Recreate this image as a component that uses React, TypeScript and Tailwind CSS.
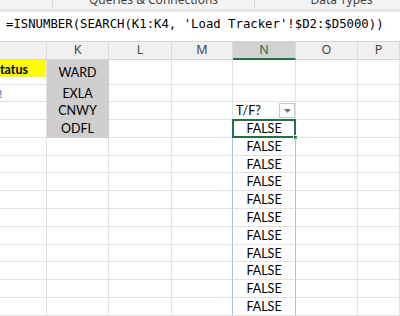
const COLS = ["w-[47px]", "w-[62px]", "w-[63px]", "w-[61px]", "w-[63px]", "w-[62px]", "flex-1"];
const LETTERS = ["", "K", "L", "M", "N", "O", "P"];
const HEIGHTS = [
  "h-[25px]", "h-[17px]", "h-[18px]", "h-[18px]", "h-[18px]", "h-[17px]", "h-[18px]",
  "h-[18px]", "h-[18px]", "h-[18px]", "h-[17px]", "h-[18px]", "h-[18px]", "h-[18px]",
];
const CARRIERS = ["WARD", "EXLA", "CNWY", "ODFL"];

const cellFont = { fontFamily: "Lato, 'Liberation Sans', sans-serif" };

function Cell({ r, c }: { r: number; c: number }) {
  const base = `${COLS[c]} shrink-0 border-r border-b relative flex items-center overflow-visible`;
  const inTable = r >= 3;

  // J column
  if (c === 0) {
    if (r === 0)
      return (
        <div className={`${base} border-[#e1e1e1] items-start overflow-hidden`}>
          <div className="h-[17px] w-full bg-[#ffff00] flex items-center justify-end pr-[18px] pt-[3px] font-bold text-[12.5px] text-black">
            Status
          </div>
        </div>
      );
    if (r === 1)
      return (
        <div className={`${base} border-[#e1e1e1] pt-[2px] text-[12px] text-[#4472c4] -indent-[1px]`}>!</div>
      );
    return <div className={`${base} border-[#e1e1e1]`} />;
  }

  // K column
  if (c === 1 && r < 4)
    return (
      <div className={`${base} bg-[#d0cece] border-[#d0cece] justify-center pt-[2px] text-[12.5px] text-black`}>
        {CARRIERS[r]}
      </div>
    );

  // M column right border becomes table edge
  if (c === 3)
    return <div className={`${base} border-b-[#e1e1e1] ${inTable ? "border-r-[#a9c0e8]" : "border-r-[#e1e1e1]"}`} />;

  // N column
  if (c === 4) {
    if (r === 2)
      return (
        <div className={`${base} border-[#e1e1e1] pl-[3px] pt-[2px] text-[12.5px] text-black`}>
          T/F?
          <div className="absolute right-0 top-[1px] w-[16px] h-[15px] bg-white border border-[#c8c8c8] flex items-center justify-center">
            <svg width="7" height="4" viewBox="0 0 7 4">
              <path d="M0 0h7L3.5 4z" fill="#777" />
            </svg>
          </div>
        </div>
      );
    if (inTable)
      return (
        <div className={`${base} border-b-[#e1e1e1] border-r-[#a9c0e8] justify-center pt-[2px] text-[12.5px] text-black`}>
          FALSE
          {r === 3 && (
            <>
              <div className="absolute -left-[1px] -top-[1px] right-[-1px] bottom-[-1px] border-2 border-[#217346]" />
              <div className="absolute right-[-3px] bottom-[-3px] w-[5px] h-[5px] bg-[#217346] border border-white" />
            </>
          )}
        </div>
      );
  }

  return <div className={`${base} border-[#e1e1e1]`} />;
}

export default function App() {
  return (
    <div className="w-[400px] h-[316px] overflow-hidden bg-white flex flex-col">
      {/* ribbon remnant */}
      <div
        className="h-[9px] bg-[#f3f3f3] flex overflow-hidden text-[12px] text-[#444] leading-[14px]"
        style={{ fontFamily: "'Noto Sans', 'Liberation Sans', sans-serif" }}
      >
        <div className="w-[53px] h-[7px] border-r border-[#d6d6d6]" />
        <div className="w-[202px] h-[7px] border-r border-[#d6d6d6] flex justify-center">
          <span className="-mt-[7px]">Queries &amp; Connections</span>
        </div>
        <div className="flex-1 flex justify-center pl-[28px]">
          <span className="-mt-[7px]">Data Types</span>
        </div>
      </div>
      <div className="h-[3px] bg-gradient-to-b from-[#e2e2e2] to-[#ececec]" />

      {/* formula bar */}
      <div
        className="h-[30px] border-b border-[#d4d4d4] pl-[6px] pt-[4px] text-[12.3px] leading-[17px] text-black whitespace-nowrap"
        style={{ fontFamily: "'DejaVu Sans Mono', 'Liberation Mono', monospace" }}
      >
        =ISNUMBER(SEARCH(K1:K4, 'Load Tracker'!$D2:$D5000))
      </div>

      {/* column headers */}
      <div
        className="h-[18px] flex bg-[#f0f0f0] text-[12.5px] text-[#444]"
        style={{ fontFamily: "'Noto Sans', 'Liberation Sans', sans-serif" }}
      >
        {LETTERS.map((l, i) => (
          <div
            key={i}
            className={`${COLS[i]} shrink-0 flex items-center justify-center border-r border-[#dadada] ${
              i === 4 ? "bg-[#d2d2d2] text-[#217346] border-b-2 border-b-[#217346]" : "border-b border-b-[#d4d4d4]"
            }`}
          >
            {l}
          </div>
        ))}
      </div>

      {/* grid */}
      <div className="flex flex-col" style={cellFont}>
        {HEIGHTS.map((h, r) => (
          <div key={r} className={`${h} flex shrink-0`}>
            {COLS.map((_, c) => (
              <Cell key={c} r={r} c={c} />
            ))}
          </div>
        ))}
      </div>
    </div>
  );
}
